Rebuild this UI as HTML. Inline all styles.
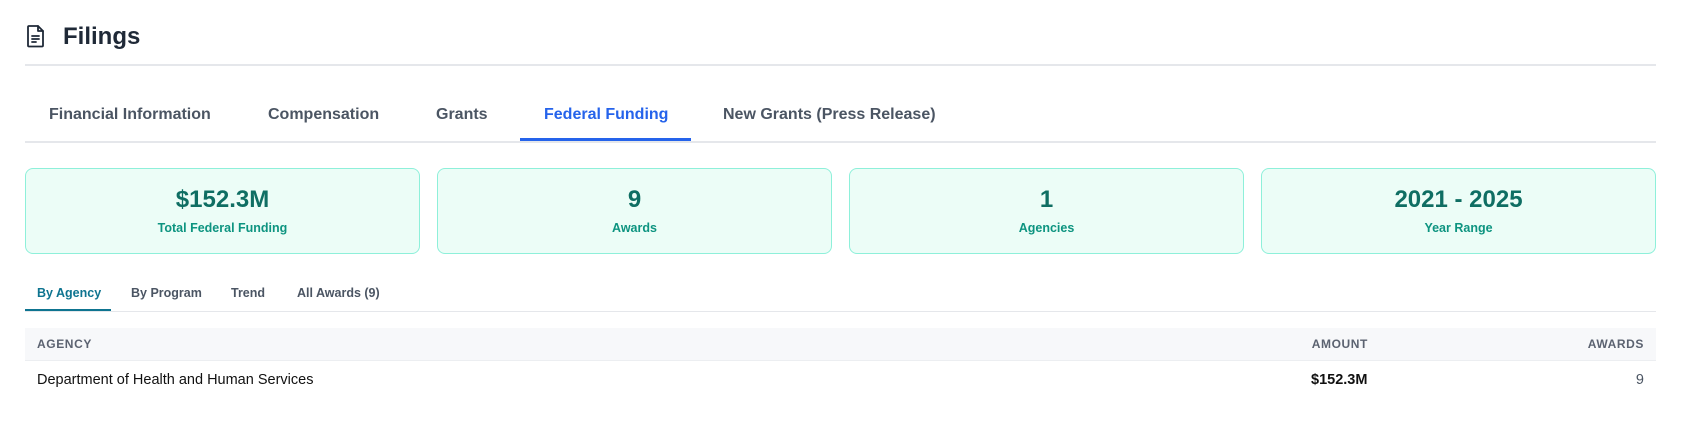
<!DOCTYPE html>
<html><head><meta charset="utf-8"><style>
*{box-sizing:border-box;margin:0;padding:0}
body{width:1685px;height:424px;background:#fff;font-family:"Liberation Sans",Arial,sans-serif;color:#111827;position:relative;overflow:hidden}
.abs{position:absolute}
.title{left:63px;top:23px;font-size:24px;font-weight:700;color:#1f2937}
.hl{left:25px;width:1631px;height:2px;background:#e5e7eb}
.tab{top:106px;font-size:16px;font-weight:700;color:#4b5563;white-space:nowrap}
.card{top:168px;width:395px;height:86px;background:#ecfdf7;border:1px solid #8ef0da;border-radius:8px;text-align:center}
.card .v{margin-top:16px;font-size:24px;font-weight:700;color:#0f6e63;line-height:30px}
.card .l{margin-top:6px;font-size:12.5px;font-weight:700;color:#0d9480}
.st{top:286px;font-size:12.5px;font-weight:700;color:#4b5563}
.th{font-size:12px;font-weight:700;color:#5b6270;letter-spacing:.6px;top:337px}
</style></head><body>
<svg class="abs" style="left:26px;top:24px" width="20" height="24" viewBox="0 0 20 24" fill="none" stroke="#1f2937" stroke-width="1.8" stroke-linejoin="round" stroke-linecap="round"><path d="M3 2h9l5 5v14.5a1 1 0 0 1-1 1H3a1 1 0 0 1-1-1V3a1 1 0 0 1 1-1z"/><path d="M12 2v5h5"/><path d="M6 12h7M6 15h7M6 18h4"/></svg>
<div class="abs title">Filings</div>
<div class="abs hl" style="top:64px"></div>
<div class="abs tab" style="left:49px">Financial Information</div>
<div class="abs tab" style="left:268px">Compensation</div>
<div class="abs tab" style="left:436px">Grants</div>
<div class="abs tab" style="left:544px;color:#2563eb">Federal Funding</div>
<div class="abs tab" style="left:723px">New Grants (Press Release)</div>
<div class="abs hl" style="top:141px"></div>
<div class="abs" style="left:520px;top:138px;width:171px;height:3px;background:#2563eb"></div>
<div class="abs card" style="left:25px"><div class="v">$152.3M</div><div class="l">Total Federal Funding</div></div>
<div class="abs card" style="left:437px"><div class="v">9</div><div class="l">Awards</div></div>
<div class="abs card" style="left:849px"><div class="v">1</div><div class="l">Agencies</div></div>
<div class="abs card" style="left:1261px"><div class="v">2021 - 2025</div><div class="l">Year Range</div></div>
<div class="abs st" style="left:37px;color:#0e7490">By Agency</div>
<div class="abs st" style="left:131px">By Program</div>
<div class="abs st" style="left:231px">Trend</div>
<div class="abs st" style="left:297px">All Awards (9)</div>
<div class="abs" style="left:25px;top:311px;width:1631px;height:1px;background:#e5e7eb"></div>
<div class="abs" style="left:25px;top:309px;width:86px;height:2px;background:#0e7490"></div>
<div class="abs" style="left:25px;top:328px;width:1631px;height:33px;background:#f7f8fa;border-bottom:1px solid #eceef1"></div>
<div class="abs th" style="left:37px">AGENCY</div>
<div class="abs th" style="right:317px">AMOUNT</div>
<div class="abs th" style="right:41px">AWARDS</div>
<div class="abs" style="left:37px;top:372px;font-size:14.5px;color:#111">Department of Health and Human Services</div>
<div class="abs" style="left:1311px;top:372px;font-size:14.5px;font-weight:700;color:#111">$152.3M</div>
<div class="abs" style="right:41px;top:372px;font-size:14.5px;color:#4b5563">9</div>
</body></html>
